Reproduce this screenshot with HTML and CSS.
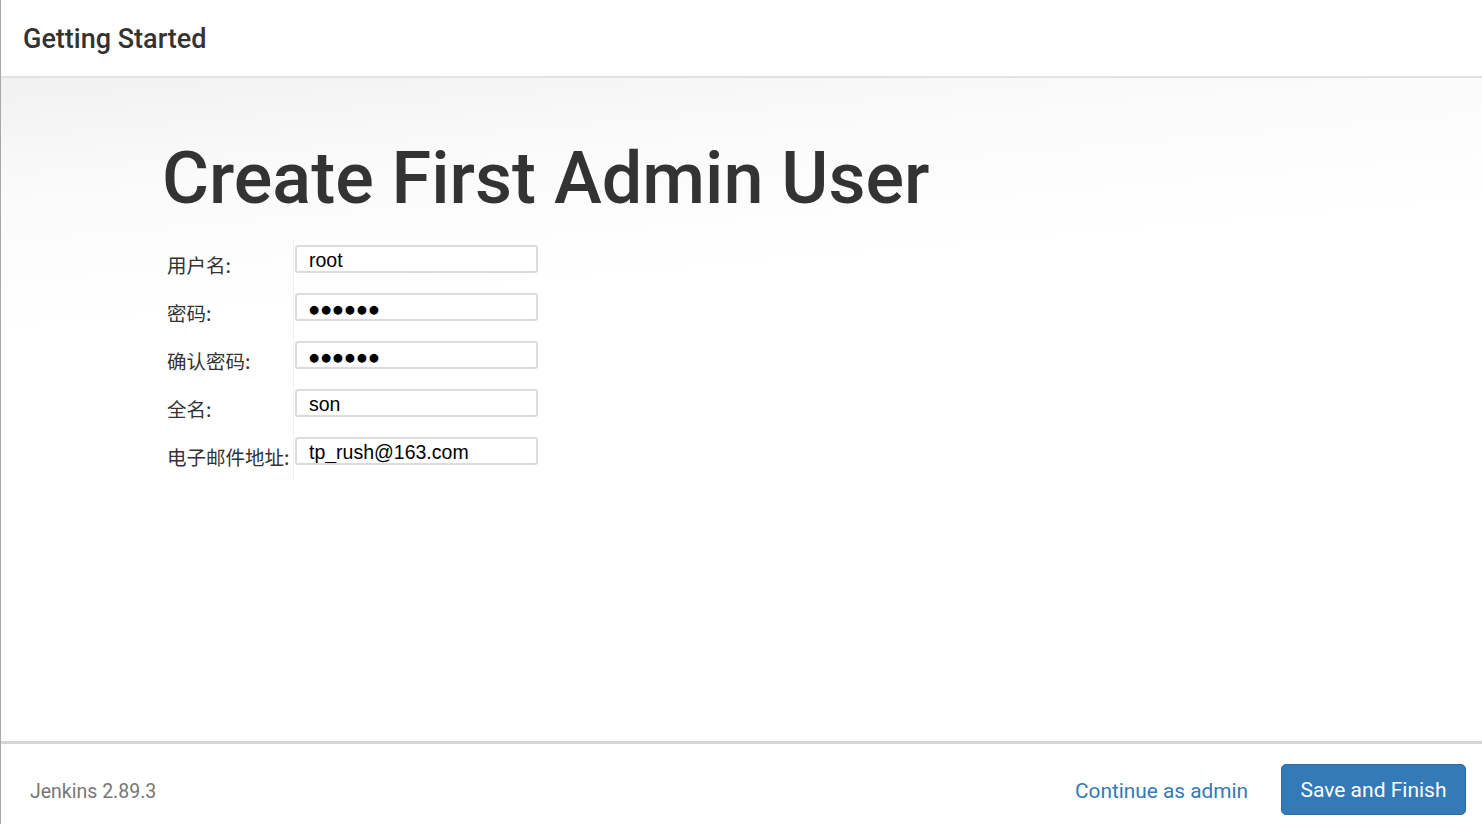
FILE: index.html
```html
<!DOCTYPE html>
<html lang="zh-CN">
<head>
    <meta charset="UTF-8">
    <meta name="viewport" content="width=device-width, initial-scale=1.0">
    <title>Getting Started | Jenkins</title>
    <link rel="stylesheet" href="styles.css">
</head>
<body>
    <div class="dialog">
        <!-- Header -->
        <div class="dialog-header">
            <h4>Getting Started</h4>
        </div>

        <!-- Create admin user -->
        <div class="dialog-body">
            <h1>Create First Admin User</h1>
            <form class="user-form">
                <div class="form-row">
                    <label for="username">用户名:</label>
                    <div class="field"><input type="text" id="username" value="root"></div>
                </div>
                <div class="form-row">
                    <label for="password1">密码:</label>
                    <div class="field"><input type="text" class="masked" id="password1" value="●●●●●●" readonly></div>
                </div>
                <div class="form-row">
                    <label for="password2">确认密码:</label>
                    <div class="field"><input type="text" class="masked" id="password2" value="●●●●●●" readonly></div>
                </div>
                <div class="form-row">
                    <label for="fullname">全名:</label>
                    <div class="field"><input type="text" id="fullname" value="son"></div>
                </div>
                <div class="form-row">
                    <label for="email">电子邮件地址:</label>
                    <div class="field"><input type="text" id="email" value="tp_rush@163.com"></div>
                </div>
            </form>
        </div>

        <!-- Footer -->
        <div class="dialog-footer">
            <div class="version">Jenkins 2.89.3</div>
            <div class="actions">
                <a href="#" class="skip-link">Continue as admin</a>
                <button type="button" class="btn-primary">Save and Finish</button>
            </div>
        </div>
    </div>
</body>
</html>
```

FILE: styles.css
```css
/* General Reset */
* {
    margin: 0;
    padding: 0;
    box-sizing: border-box;
}

body {
    font-family: Roboto, 'Liberation Sans', sans-serif;
    background: #fff;
    color: #333;
}

.dialog {
    height: 100vh;
    display: flex;
    flex-direction: column;
    border-left: 1px solid #a8a8a8;
}

.dialog-header {
    height: 78px;
    padding-left: 22px;
    display: flex;
    align-items: center;
    border-bottom: 2px solid #e2e2e2;
}

.dialog-header h4 {
    font-size: 27px;
    font-weight: 500;
    color: #333;
    margin-top: 1px;
}

.dialog-body {
    flex: 1;
    padding: 65px 0 0 161px;
    background: linear-gradient(175deg, #f1f1f1 0%, #fafafa 14%, #fff 32%);
}

.dialog-body h1 {
    font-size: 72px;
    font-weight: 500;
    line-height: 1;
    color: #333;
    margin-bottom: 25px;
}

.user-form {
    margin-left: 5px;
}

.form-row {
    display: grid;
    grid-template-columns: 126px 246px;
    height: 48px;
}

.form-row label {
    font-family: 'Noto Sans CJK SC', 'Liberation Sans', sans-serif;
    font-size: 19.5px;
    line-height: 20px;
    padding-top: 15px;
    color: #333;
    white-space: nowrap;
}

.field {
    border-left: 1px solid #f0f0f0;
    padding: 5px 0 0 1px;
}

.field input {
    width: 243px;
    height: 28px;
    border: 2px solid #dcdcdc;
    border-radius: 3px;
    padding: 3px 12px 0;
    font-family: 'Liberation Sans', Arial, sans-serif;
    font-size: 19.5px;
    color: #000;
    background: #fff;
    outline: none;
}

.field input.masked {
    font-family: 'DejaVu Sans', sans-serif;
    font-size: 11.5px;
    letter-spacing: 1.9px;
    padding-top: 4px;
}

.dialog-footer {
    height: 83px;
    border-top: 3px solid #d6d6d6;
    display: flex;
    justify-content: space-between;
    align-items: center;
    padding: 11px 16px 0 29px;
}

.version {
    font-size: 19.5px;
    color: #777;
    margin-top: 3px;
}

.actions {
    display: flex;
    align-items: center;
    gap: 33px;
}

.skip-link {
    font-size: 20.8px;
    color: #337ab7;
    text-decoration: none;
    margin-top: 2px;
}

.btn-primary {
    height: 51px;
    padding: 0 18.5px;
    background-color: #337ab7;
    border: 1px solid #2e6da4;
    border-radius: 5px;
    color: #fff;
    font-family: Roboto, 'Liberation Sans', sans-serif;
    font-size: 21px;
    cursor: pointer;
}
```
